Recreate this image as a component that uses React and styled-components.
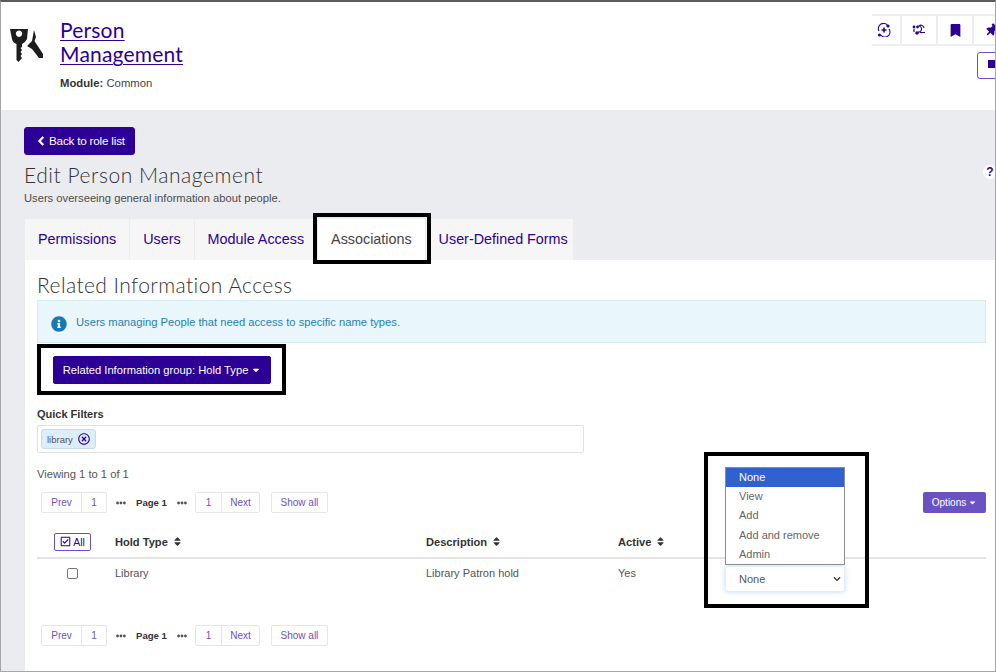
import React from 'react';
import styled, { createGlobalStyle } from 'styled-components';
import {
  FaBookmark,
  FaCaretDown,
  FaChevronDown,
  FaChevronLeft,
  FaEllipsisH,
  FaInfoCircle,
  FaRegCheckSquare,
  FaRegTimesCircle,
  FaSort,
  FaThumbtack,
} from 'react-icons/fa';

const PURPLE = '#2d0095';
const SOFT_PURPLE = '#6a52c4';
const HEADING_FONT = 'Lato, "Open Sans", sans-serif';

const GlobalStyle = createGlobalStyle`
  html, body {
    margin: 0;
    padding: 0;
    background: #fff;
  }

  body {
    font-family: "Liberation Sans", Arial, sans-serif;
    color: #444;
  }
`;

const Frame = styled.div`
  box-sizing: border-box;
  width: 996px;
  height: 672px;
  overflow: hidden;
  border-top: 2px solid #5c5c5c;
  border-left: 1px solid #a6a6a6;
  border-right: 1px solid #a6a6a6;
  border-bottom: 1px solid #a6a6a6;
  display: flex;
  flex-direction: column;
  background: #ebecf0;
`;

const Header = styled.header`
  flex: none;
  height: 108px;
  background: #fff;
  display: flex;
  justify-content: space-between;
`;

const Identity = styled.div`
  display: flex;
  padding: 16px 0 0 9px;
`;

const KeyIcon = styled.svg`
  width: 34px;
  height: 40px;
  margin-top: 8px;
  margin-right: 16px;
`;

const TitleBlock = styled.div`
  width: 140px;
`;

const TitleLink = styled.a`
  display: block;
  font-family: ${HEADING_FONT};
  font-size: 21px;
  line-height: 24px;
  letter-spacing: 0.2px;
  color: ${PURPLE};
  text-decoration: underline;
  text-decoration-thickness: 1px;
  text-underline-offset: 2px;
`;

const ModuleLine = styled.div`
  margin-top: 10px;
  font-size: 11.3px;
  line-height: 14px;
  color: #444;

  b {
    color: #333;
  }
`;

const HeaderActions = styled.div`
  flex: none;
  width: 130px;
  margin-right: -7px;
  padding-top: 12px;
  display: flex;
  flex-direction: column;
`;

const Toolbar = styled.div`
  display: flex;
  border-top: 2px solid #eeeeee;
  border-bottom: 2px solid #eeeeee;
`;

const ToolButton = styled.div`
  box-sizing: border-box;
  flex: none;
  width: ${(p) => p.$width || 36}px;
  height: 28px;
  padding-right: ${(p) => p.$nudge || 0}px;
  display: flex;
  align-items: center;
  justify-content: center;
  color: ${PURPLE};
  border-right: 2px solid #eeeeee;
  font-size: 13px;
`;

const OutlineSquareButton = styled.div`
  box-sizing: border-box;
  width: 36px;
  height: 27px;
  margin-top: 6px;
  margin-left: 105px;
  border: 1px solid ${SOFT_PURPLE};
  border-radius: 3px;
  padding: 7px 0 0 10px;

  &::before {
    content: '';
    display: block;
    width: 10px;
    height: 8px;
    background: ${PURPLE};
  }
`;

const Page = styled.main`
  flex: 1;
  padding: 17px 0 0 23px;
  min-height: 0;
  display: flex;
  flex-direction: column;
`;

const BackButton = styled.button`
  align-self: flex-start;
  box-sizing: border-box;
  height: 28px;
  width: 111px;
  display: flex;
  align-items: center;
  gap: 3px;
  padding: 0 0 1px 11px;
  border: 1px solid ${PURPLE};
  border-radius: 3px;
  background: ${PURPLE};
  color: #fff;
  font-family: inherit;
  font-size: 11.7px;
  letter-spacing: -0.2px;
  white-space: nowrap;

  svg {
    font-size: 10px;
    stroke: currentColor;
    stroke-width: 40px;
  }
`;

const TitleRow = styled.div`
  display: flex;
  justify-content: space-between;
  align-items: center;
  height: 22px;
  margin-top: 9px;
`;

const PageTitle = styled.h1`
  margin: 0;
  font-family: ${HEADING_FONT};
  font-size: 21px;
  line-height: 22px;
  font-weight: 300;
  letter-spacing: 0.55px;
  color: #333;
`;

const HelpBadge = styled.span`
  width: 14px;
  height: 14px;
  flex: none;
  margin-right: -2px;
  margin-top: -6px;
  border-radius: 50%;
  background: #fff;
  color: ${PURPLE};
  font-size: 12px;
  font-weight: 700;
  line-height: 14px;
  text-align: center;
`;

const Subtitle = styled.p`
  margin: 5px 0 0;
  font-size: 11.2px;
  line-height: 14px;
  color: #4d4d4d;
`;

const TabBar = styled.nav`
  display: flex;
  gap: 1px;
  margin-top: 14px;
  margin-left: 1px;
`;

const Tab = styled.a`
  position: relative;
  box-sizing: border-box;
  height: 41px;
  padding: 0 ${(p) => (p.$last ? 5 : 13)}px 1px 13px;
  display: flex;
  align-items: center;
  font-size: 14.35px;
  color: ${(p) => (p.$active ? '#444' : PURPLE)};
  background: ${(p) => (p.$active ? '#fff' : '#f6f6f6')};
`;

const Callout = styled.span`
  position: absolute;
  z-index: 2;
  inset: ${(p) => p.$inset};
  border: 4px solid #000;
  pointer-events: none;
`;

const Panel = styled.section`
  flex: 1;
  min-height: 0;
  margin-left: 1px;
  padding: 12px 9px 0 12px;
  background: #fff;
`;

const SectionTitle = styled.h2`
  margin: 0;
  font-family: ${HEADING_FONT};
  font-size: 21px;
  line-height: 26px;
  font-weight: 300;
  letter-spacing: 0.42px;
  color: #333;
`;

const InfoAlert = styled.div`
  box-sizing: border-box;
  height: 43px;
  display: flex;
  align-items: center;
  gap: 9px;
  margin-top: 2px;
  padding: 0 13px;
  border: 1px solid #d6ecf5;
  background: #e9f7fd;
  color: #1f7fb5;
  font-size: 11.2px;

  svg {
    font-size: 16px;
    color: #1a78b4;
    margin-top: 4px;
  }
`;

const GroupButton = styled.button`
  position: relative;
  box-sizing: border-box;
  display: flex;
  align-items: center;
  justify-content: center;
  gap: 3px;
  width: 218px;
  height: 28px;
  margin: 13px 0 0 16px;
  border: 1px solid ${PURPLE};
  border-radius: 2px;
  background: ${PURPLE};
  color: #fff;
  font-family: inherit;
  font-size: 11.2px;
  white-space: nowrap;

  svg {
    font-size: 10px;
  }
`;

const FilterLabel = styled.label`
  display: block;
  margin-top: 24px;
  font-size: 11px;
  line-height: 13px;
  font-weight: 700;
  color: #333;
`;

const FilterInput = styled.div`
  box-sizing: border-box;
  display: flex;
  width: 547px;
  height: 28px;
  margin-top: 4px;
  padding: 3px;
  border: 1px solid #e2e2e2;
  border-radius: 2px;
`;

const FilterChip = styled.span`
  box-sizing: border-box;
  display: inline-flex;
  align-items: center;
  gap: 5px;
  width: 55px;
  height: 20px;
  padding-left: 5px;
  border: 1px solid #c5dcf2;
  border-radius: 3px;
  background: #dcedfb;
  color: #555;
  font-size: 9.5px;

  svg {
    color: ${PURPLE};
    font-size: 12px;
  }
`;

const ViewingText = styled.div`
  margin-top: 14px;
  font-size: 11.2px;
  line-height: 14px;
  color: #555;
`;

const PagerRow = styled.div`
  display: flex;
  justify-content: space-between;
  align-items: center;
  height: 21px;
  margin-top: ${(p) => p.$top}px;
  padding-left: 4px;
`;

const Pager = styled.div`
  display: flex;
  align-items: center;
`;

const PagerGroup = styled.div`
  display: flex;
  height: 21px;
  border: 1px solid #e6e6e6;
  border-radius: 2px;
  box-sizing: border-box;
`;

const PagerItem = styled.a`
  box-sizing: border-box;
  width: ${(p) => p.$width}px;
  display: flex;
  align-items: center;
  justify-content: center;
  font-size: 10px;
  color: ${SOFT_PURPLE};

  & + & {
    border-left: 1px solid #e6e6e6;
  }
`;

const PagerCurrent = styled.span`
  display: flex;
  align-items: center;
  gap: 10px;
  margin: 0 8px 0 9px;
  font-size: 9.6px;
  font-weight: 700;
  color: #333;

  svg {
    font-size: 10px;
    color: #555;
  }
`;

const ShowAll = styled(PagerGroup)`
  width: 57px;
  margin-left: 11px;
  align-items: center;
  justify-content: center;
  font-size: 10px;
  color: ${SOFT_PURPLE};
`;

const OptionsButton = styled.button`
  box-sizing: border-box;
  height: 21px;
  width: 63px;
  display: flex;
  align-items: center;
  justify-content: center;
  gap: 2px;
  border: none;
  border-radius: 2px;
  background: #6a52c4;
  color: #fff;
  font-family: inherit;
  font-size: 10px;
  padding: 0;

  svg {
    font-size: 9px;
  }
`;

const TableRow = styled.div`
  display: grid;
  grid-template-columns: 78px 311px 192px 107px 120px;
`;

const HeadRow = styled(TableRow)`
  height: 35px;
  margin-top: 9px;
  border-bottom: 2px solid #e3e3e3;
  box-sizing: content-box;
  align-items: center;
`;

const HeadCell = styled.div`
  display: flex;
  align-items: center;
  gap: 4px;
  margin-top: 4px;
  font-size: 11.1px;
  font-weight: 700;
  color: #333;

  svg {
    font-size: 11px;
  }
`;

const SelectAll = styled.button`
  box-sizing: border-box;
  width: 37px;
  height: 18px;
  margin: 4px 0 0 17px;
  display: flex;
  align-items: center;
  justify-content: center;
  gap: 2px;
  padding: 0;
  border: 1px solid ${SOFT_PURPLE};
  border-radius: 2px;
  background: #fff;
  color: ${PURPLE};
  font-family: inherit;
  font-size: 10.5px;

  svg {
    font-size: 11px;
  }
`;

const BodyRow = styled(TableRow)`
  height: 66px;
`;

const BodyCell = styled.div`
  padding-top: 7px;
  font-size: 11px;
  line-height: 14px;
  color: #555;
`;

const RowCheckbox = styled.span`
  box-sizing: border-box;
  display: block;
  width: 11px;
  height: 11px;
  margin: 2px 0 0 30px;
  border: 1px solid #777;
  border-radius: 2px;
`;

const AccessCell = styled.div`
  position: relative;
  height: 26px;
  margin-top: 7px;
`;

const AccessSelect = styled.select`
  box-sizing: border-box;
  appearance: none;
  width: 120px;
  height: 26px;
  padding-left: 13px;
  border: 1px solid #e3edf6;
  border-radius: 3px;
  background: #fff;
  box-shadow: 0 0 5px rgba(120, 180, 240, 0.45);
  color: #555;
  font-family: inherit;
  font-size: 11px;
`;

const SelectChevron = styled(FaChevronDown)`
  position: absolute;
  top: 9px;
  right: 4px;
  font-size: 8px;
  color: #333;
  pointer-events: none;
`;

const OptionList = styled.ul`
  position: absolute;
  left: 0;
  bottom: 100%;
  box-sizing: border-box;
  width: 120px;
  height: 98px;
  margin: 0 0 1px;
  padding: 0;
  list-style: none;
  border: 1px solid #8b8b8b;
  background: #fff;
`;

const OptionItem = styled.li`
  height: 19.2px;
  padding-left: 13px;
  font-size: 11px;
  line-height: 19.2px;
  color: ${(p) => (p.$selected ? '#fff' : '#666')};
  background: ${(p) => (p.$selected ? '#2f62d0' : 'transparent')};
`;

const ACCESS_LEVELS = ['None', 'View', 'Add', 'Add and remove', 'Admin'];

const KeysGraphic = () => (
  <KeyIcon viewBox="0 0 34 40" aria-hidden="true">
    <path
      fill="#1d1d1d"
      fillRule="evenodd"
      d="M0 3 L18 3 L17 13 Q15 17 12 18 L12 21 L10.5 22 L12 24 L10.5 26 L12 28 L10.5 30 L12 32 L8.5 36 L6.5 34 L6.5 18 Q3 17 2 13 Z M9 4.5 a3.2 3.2 0 1 0 0.01 0 Z"
    />
    <path
      fill="#1d1d1d"
      d="M24 4 L26 11 L24.5 15 L33 28 L33 32 L29 32 L22 23 L17 20 L22 15 Z"
    />
  </KeyIcon>
);

const RotateIcon = () => (
  <svg width="14" height="14" viewBox="0 0 14 14" fill="none" stroke={PURPLE} aria-hidden="true">
    <path d="M2 8 A5 5 0 0 1 11 3" strokeWidth="1.1" />
    <path d="M12 6 A5 5 0 0 1 4 12" strokeWidth="1.1" />
    <path d="M7 4.5 v5 M4.5 7 h5" strokeWidth="1.6" />
    <circle cx="11" cy="3" r="1.6" fill={PURPLE} stroke="none" />
    <circle cx="2.5" cy="12" r="1.6" fill={PURPLE} stroke="none" />
  </svg>
);

const SwapIcon = () => (
  <svg width="14" height="12" viewBox="0 0 14 12" fill="none" stroke={PURPLE} aria-hidden="true">
    <circle cx="2" cy="3" r="1.4" fill={PURPLE} stroke="none" />
    <circle cx="5" cy="9" r="1.8" fill={PURPLE} stroke="none" />
    <path d="M6 8 A3 3 0 0 0 7 2 A3 3 0 0 1 12 4 M13 8.5 H8 M2 5 V8" strokeWidth="1.2" />
    <circle cx="5.5" cy="3" r="1.4" fill={PURPLE} stroke="none" />
  </svg>
);

const Pagination = () => (
  <Pager>
    <PagerGroup>
      <PagerItem $width={39}>Prev</PagerItem>
      <PagerItem $width={25}>1</PagerItem>
    </PagerGroup>
    <PagerCurrent>
      <FaEllipsisH />
      Page 1
      <FaEllipsisH />
    </PagerCurrent>
    <PagerGroup>
      <PagerItem $width={25}>1</PagerItem>
      <PagerItem $width={38}>Next</PagerItem>
    </PagerGroup>
    <ShowAll>Show all</ShowAll>
  </Pager>
);

const App = () => {
  return (
    <Frame>
      <GlobalStyle />
      <Header>
        <Identity>
          <KeysGraphic />
          <TitleBlock>
            <TitleLink href="#">Person Management</TitleLink>
            <ModuleLine>
              <b>Module:</b> Common
            </ModuleLine>
          </TitleBlock>
        </Identity>
        <HeaderActions>
          <Toolbar>
            <ToolButton $width={30} $nudge={4}>
              <RotateIcon />
            </ToolButton>
            <ToolButton>
              <SwapIcon />
            </ToolButton>
            <ToolButton>
              <FaBookmark />
            </ToolButton>
            <ToolButton>
              <FaThumbtack style={{ transform: 'rotate(45deg)' }} />
            </ToolButton>
          </Toolbar>
          <OutlineSquareButton />
        </HeaderActions>
      </Header>

      <Page>
        <BackButton>
          <FaChevronLeft />
          Back to role list
        </BackButton>
        <TitleRow>
          <PageTitle>Edit Person Management</PageTitle>
          <HelpBadge>?</HelpBadge>
        </TitleRow>
        <Subtitle>Users overseeing general information about people.</Subtitle>

        <TabBar>
          <Tab>Permissions</Tab>
          <Tab>Users</Tab>
          <Tab>Module Access</Tab>
          <Tab $active>
            Associations
            <Callout $inset="-6px -6px -4px -5px" />
          </Tab>
          <Tab $last>User-Defined Forms</Tab>
        </TabBar>

        <Panel>
          <SectionTitle>Related Information Access</SectionTitle>
          <InfoAlert>
            <FaInfoCircle />
            <span>Users managing People that need access to specific name types.</span>
          </InfoAlert>

          <GroupButton>
            Related Information group: Hold Type
            <FaCaretDown />
            <Callout $inset="-13px -16px -12px -17px" />
          </GroupButton>

          <FilterLabel>Quick Filters</FilterLabel>
          <FilterInput>
            <FilterChip>
              library
              <FaRegTimesCircle />
            </FilterChip>
          </FilterInput>

          <ViewingText>Viewing 1 to 1 of 1</ViewingText>

          <PagerRow $top={11}>
            <Pagination />
            <OptionsButton>
              Options
              <FaCaretDown />
            </OptionsButton>
          </PagerRow>

          <HeadRow>
            <SelectAll>
              <FaRegCheckSquare />
              All
            </SelectAll>
            <HeadCell>
              Hold Type
              <FaSort />
            </HeadCell>
            <HeadCell>
              Description
              <FaSort />
            </HeadCell>
            <HeadCell>
              Active
              <FaSort />
            </HeadCell>
            <div />
          </HeadRow>

          <BodyRow>
            <BodyCell>
              <RowCheckbox />
            </BodyCell>
            <BodyCell>Library</BodyCell>
            <BodyCell>Library Patron hold</BodyCell>
            <BodyCell>Yes</BodyCell>
            <AccessCell>
              <OptionList>
                {ACCESS_LEVELS.map((level, i) => (
                  <OptionItem key={level} $selected={i === 0}>
                    {level}
                  </OptionItem>
                ))}
              </OptionList>
              <AccessSelect defaultValue="None">
                {ACCESS_LEVELS.map((level) => (
                  <option key={level}>{level}</option>
                ))}
              </AccessSelect>
              <SelectChevron />
              <Callout $inset="-114px -24px -16px -21px" />
            </AccessCell>
          </BodyRow>

          <PagerRow $top={0}>
            <Pagination />
          </PagerRow>
        </Panel>
      </Page>
    </Frame>
  );
};

export default App;
